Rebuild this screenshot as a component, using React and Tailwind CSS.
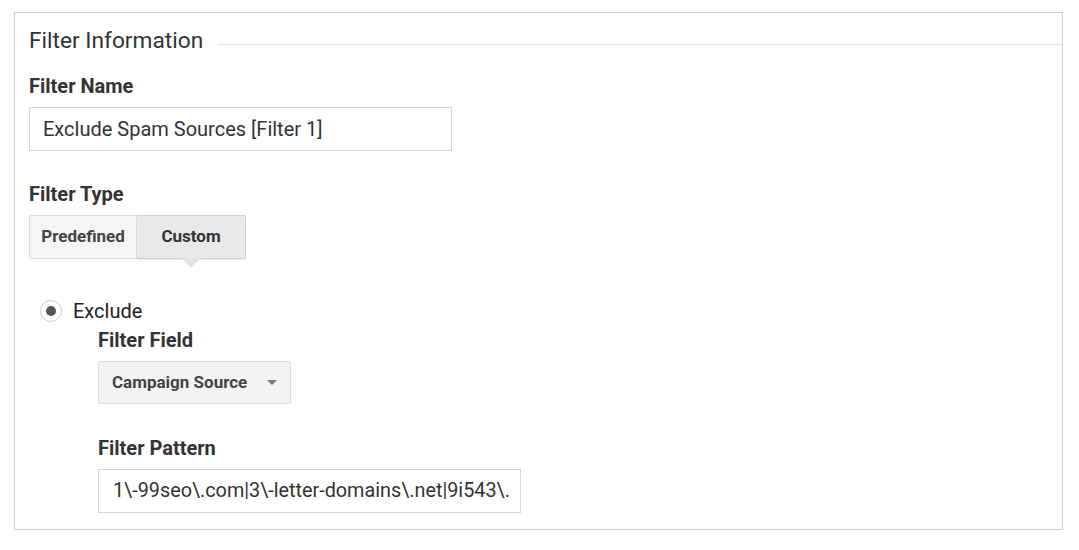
export default function App() {
  return (
    <div className="h-[550px] w-[1079px] bg-white pl-[14px] pt-[12px] font-['Roboto',sans-serif] text-[#333]">
      <div className="h-[518px] w-[1049px] border border-[#cfcfcf] pl-[14px] pt-[14px]">
        {/* Header */}
        <div className="flex items-center">
          <h2 className="text-[22.7px] leading-[28px] text-[#333]">Filter Information</h2>
          <div className="ml-[15px] mt-[6px] h-px flex-1 bg-[#e2e2e2]" />
        </div>

        {/* Filter name */}
        <div className="mt-[19px] text-[20px] font-bold leading-[24px]">Filter Name</div>
        <div className="mt-[9px] flex h-[44px] w-[423px] items-center border border-[#d6d6d6] px-[13px] text-[20px]">
          Exclude Spam Sources [Filter 1]
        </div>

        {/* Filter type */}
        <div className="mt-[31px] text-[20px] font-bold leading-[24px]">Filter Type</div>
        <div className="relative mt-[9px] flex h-[44px] w-[217px]">
          <button className="flex w-[108px] items-center justify-center rounded-l-[2px] border border-[#dcdcdc] bg-[#f5f5f5] text-[17px] font-bold text-[#444]">
            Predefined
          </button>
          <button className="relative flex w-[109px] items-center justify-center rounded-r-[2px] border border-l-0 border-[#d0d0d0] bg-[#e9e9e9] text-[17px] font-bold text-[#333] shadow-[0_1px_1px_rgba(0,0,0,0.08)]">
            Custom
            <span className="absolute left-1/2 top-full -ml-[10px] h-0 w-0 border-x-[10px] border-t-[10px] border-x-transparent border-t-[#e2e2e2]" />
          </button>
        </div>

        {/* Exclude */}
        <div className="ml-[11px] mt-[40px] flex items-center">
          <span className="flex h-[22px] w-[22px] items-center justify-center rounded-full border border-[#cfcfcf] bg-white">
            <span className="h-[10px] w-[10px] rounded-full bg-[#555]" />
          </span>
          <span className="ml-[11px] text-[20px] leading-[24px] text-[#222]">Exclude</span>
        </div>

        <div className="ml-[69px]">
          <div className="mt-[5px] text-[20px] font-bold leading-[24px]">Filter Field</div>
          <div className="mt-[9px] flex h-[43px] w-[193px] items-center justify-between rounded-[2px] border border-[#dcdcdc] bg-[#f3f3f3] pl-[13px] pr-[13px]">
            <span className="text-[17px] font-bold text-[#444]">Campaign Source</span>
            <span className="h-0 w-0 border-x-[5px] border-t-[5px] border-x-transparent border-t-[#777]" />
          </div>

          <div className="mt-[32px] text-[20px] font-bold leading-[24px]">Filter Pattern</div>
          <div className="mt-[9px] flex h-[44px] w-[423px] items-center overflow-hidden whitespace-nowrap border border-[#d6d6d6] px-[14px] text-[19.8px] text-[#333]">
            1\-99seo\.com|3\-letter-domains\.net|9i543\.
          </div>
        </div>
      </div>
    </div>
  );
}
